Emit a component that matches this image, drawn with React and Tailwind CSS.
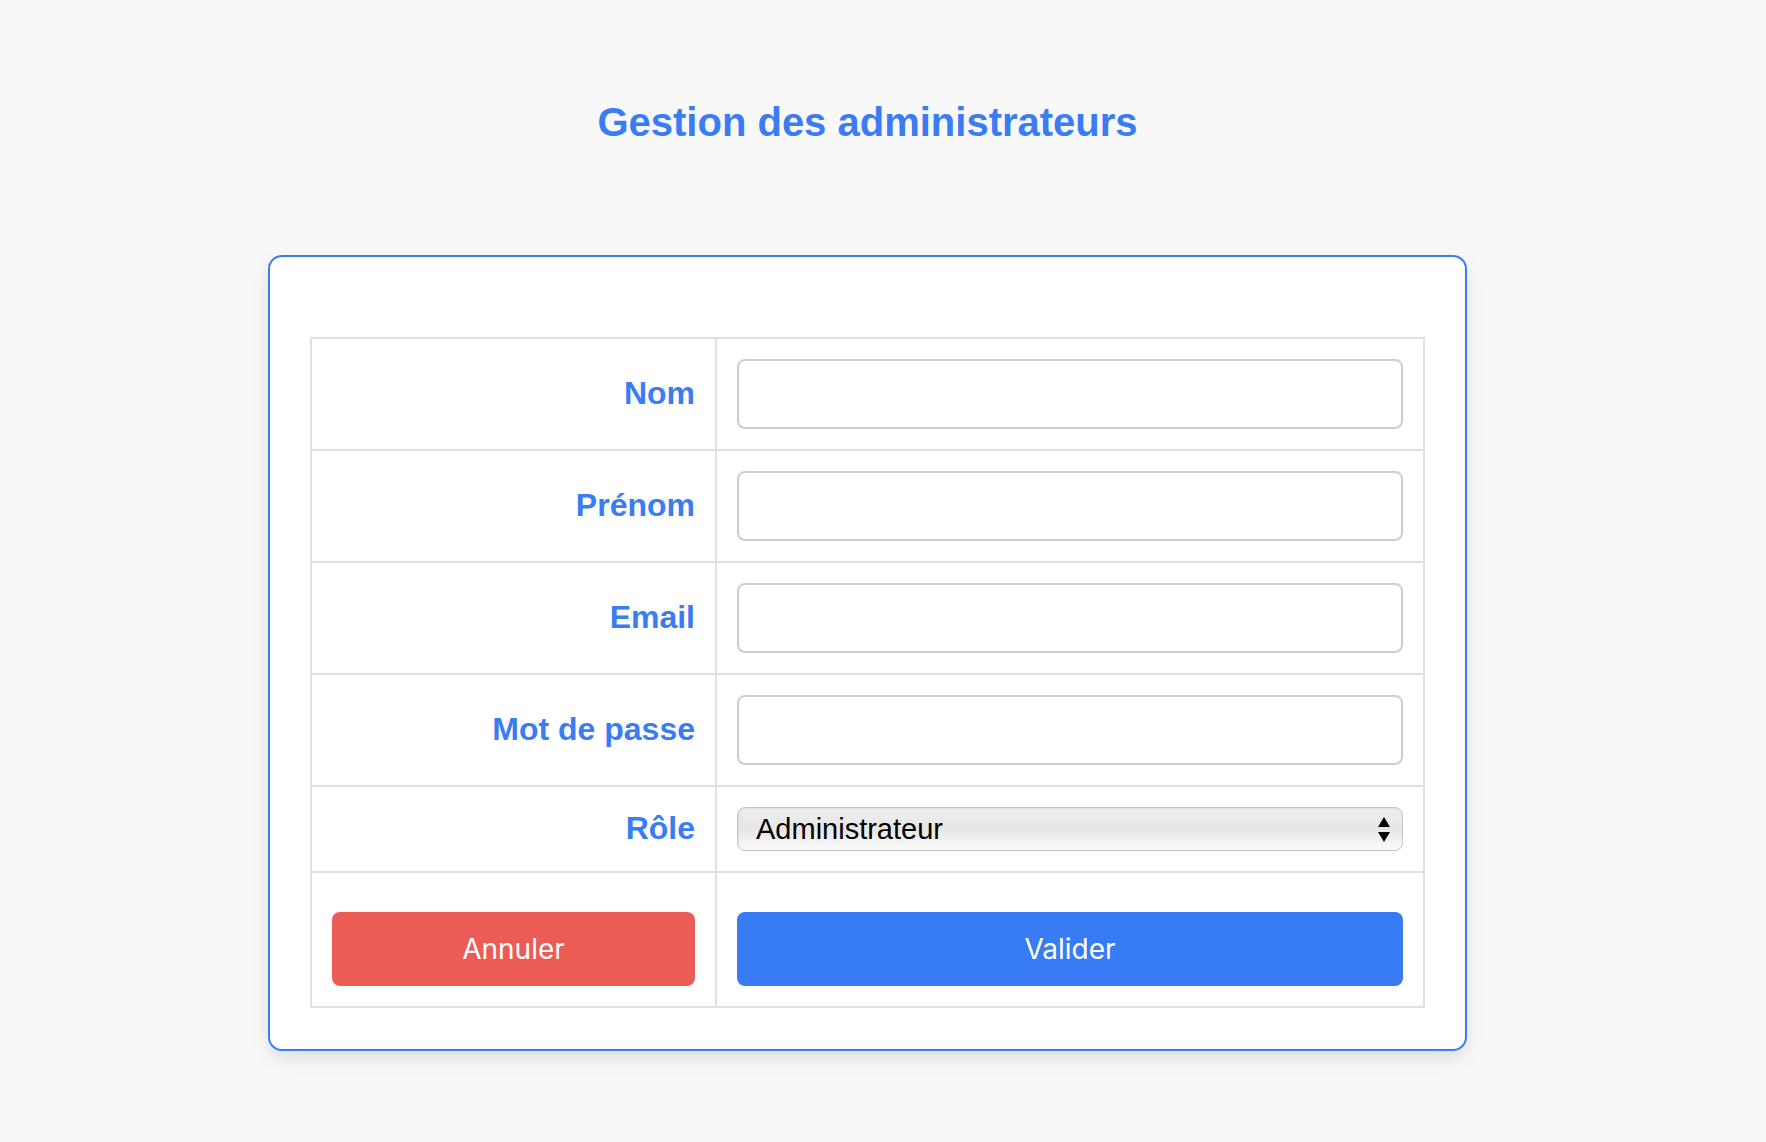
import React from 'react'

const fields = [
  { label: 'Nom', type: 'text' },
  { label: 'Prénom', type: 'text' },
  { label: 'Email', type: 'email' },
  { label: 'Mot de passe', type: 'password' },
]

const labelCell =
  "flex items-center justify-end pr-5 pb-[3px] border-r-2 border-b-2 border-[#e0e0e0] text-[32px] font-bold text-[#3a7cf3] font-['Liberation_Sans',Arial,sans-serif]"

const App = () => {
  return (
    <div className="min-h-screen bg-[#f8f8f8] pr-[31px] pb-20">
      <h1 className="pt-[99px] text-center text-[40px] leading-[46px] font-bold text-[#3a7cf3] font-['Liberation_Sans',Arial,sans-serif]">
        Gestion des administrateurs
      </h1>

      <div className="mx-auto mt-[110px] w-[1199px] rounded-[14px] border-2 border-[#3a7cf3] bg-white px-10 pt-20 pb-[41px] shadow-[0_8px_18px_rgba(0,0,0,0.10)]">
        <div className="grid grid-cols-[405px_1fr] border-t-2 border-l-2 border-r-2 border-[#e0e0e0]">
          {fields.map((f) => (
            <React.Fragment key={f.label}>
              <div className={labelCell}>{f.label}</div>
              <div className="border-b-2 border-[#e0e0e0] px-5 py-5">
                <input
                  type={f.type}
                  className="block h-[70px] w-full rounded-[8px] border-2 border-[#cdcdcd] bg-white px-4 text-[28px] outline-none"
                />
              </div>
            </React.Fragment>
          ))}

          <div className={labelCell}>Rôle</div>
          <div className="border-b-2 border-[#e0e0e0] px-5 pt-5 pb-5">
            <div className="relative">
              <select
                defaultValue="admin"
                className="block h-[44px] w-full appearance-none rounded-[8px] border border-[#c4c4c4] bg-gradient-to-b from-[#efefef] via-[#e6e6e6] to-[#fbfbfb] pl-[18px] text-[29px] leading-[42px] text-black shadow-[inset_1px_1px_2px_rgba(0,0,0,0.08)] outline-none font-['Liberation_Sans',Arial,sans-serif]"
              >
                <option value="admin">Administrateur</option>
                <option value="super">Super administrateur</option>
              </select>
              <svg
                className="pointer-events-none absolute right-[13px] top-[10px]"
                width="12"
                height="25"
                viewBox="0 0 12 25"
              >
                <path d="M6 0 L12 10 L0 10 Z" fill="#000" />
                <path d="M0 15 L12 15 L6 25 Z" fill="#000" />
              </svg>
            </div>
          </div>

          <div className="border-r-2 border-b-2 border-[#e0e0e0] px-5 pt-[39px] pb-[20px]">
            <button className="h-[74px] w-full rounded-[8px] bg-[#ec5c57] text-[28px] text-white font-['Inter',sans-serif]">
              Annuler
            </button>
          </div>
          <div className="border-b-2 border-[#e0e0e0] px-5 pt-[39px] pb-[20px]">
            <button className="h-[74px] w-full rounded-[8px] bg-[#377bf5] text-[28px] text-white font-['Inter',sans-serif]">
              Valider
            </button>
          </div>
        </div>
      </div>
    </div>
  )
}

export default App
